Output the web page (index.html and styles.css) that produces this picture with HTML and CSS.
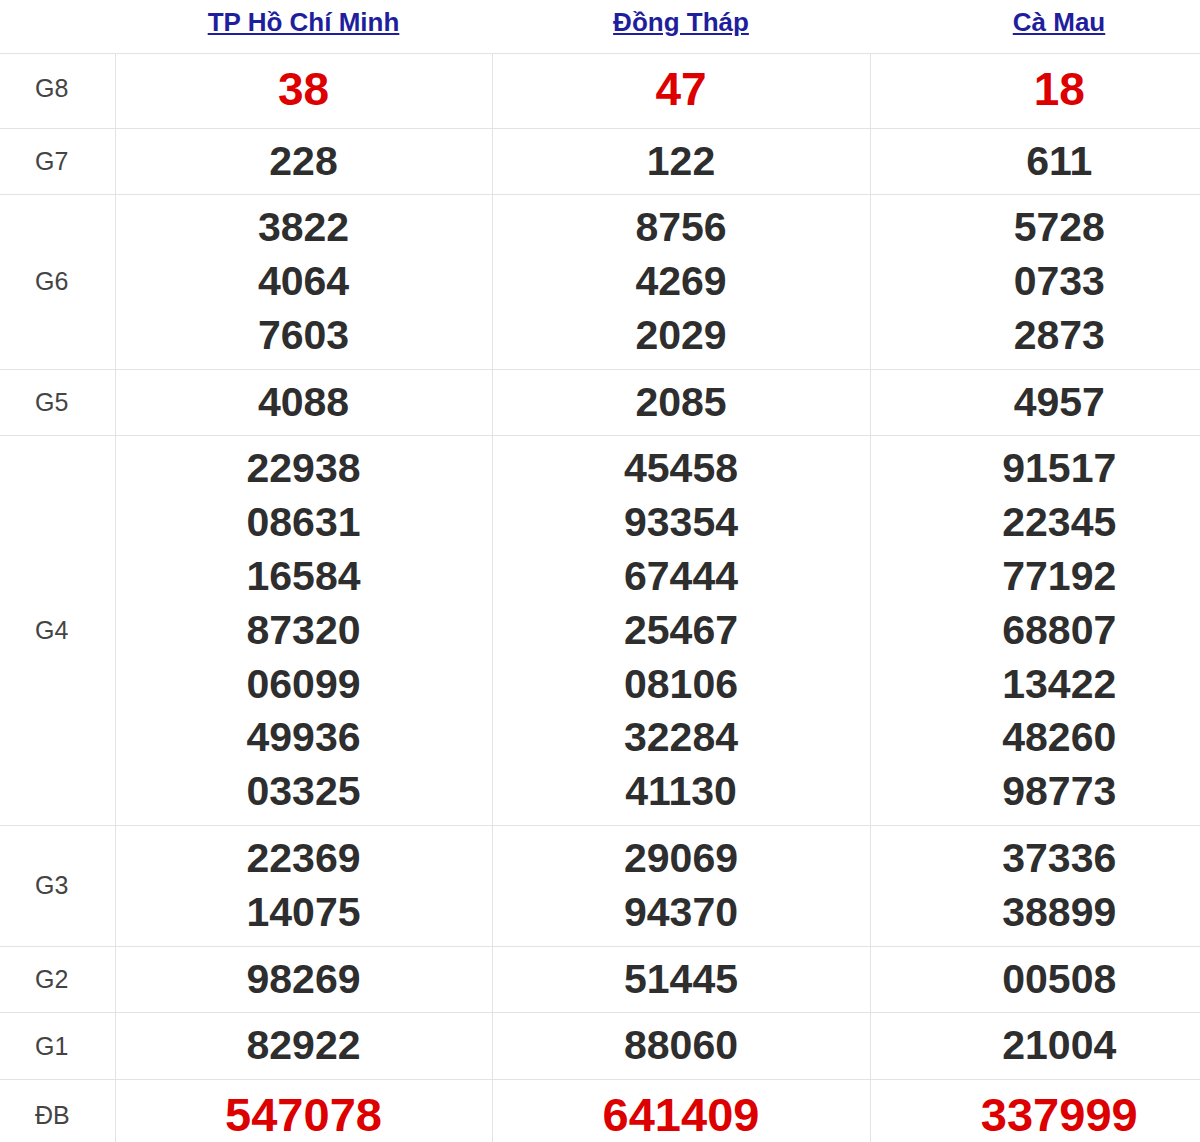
FILE: index.html
```html
<!DOCTYPE html>
<html lang="vi">
<head>
<meta charset="utf-8">
<title>Kết quả xổ số</title>
<link rel="stylesheet" href="styles.css">
</head>
<body>
<table class="kq">
  <colgroup>
    <col class="c-label">
    <col class="c-first">
    <col class="c-prov">
    <col class="c-prov">
  </colgroup>
  <thead>
    <tr class="head">
      <th></th>
      <th><a href="#">TP Hồ Chí Minh</a></th>
      <th><a href="#">Đồng Tháp</a></th>
      <th><a href="#">Cà Mau</a></th>
    </tr>
  </thead>
  <tbody>
    <tr class="g8">
      <td class="lbl">G8</td>
      <td><div class="n red">38</div></td>
      <td><div class="n red">47</div></td>
      <td><div class="n red">18</div></td>
    </tr>
    <tr>
      <td class="lbl">G7</td>
      <td><div class="n">228</div></td>
      <td><div class="n">122</div></td>
      <td><div class="n">611</div></td>
    </tr>
    <tr>
      <td class="lbl">G6</td>
      <td><div class="n">3822</div><div class="n">4064</div><div class="n">7603</div></td>
      <td><div class="n">8756</div><div class="n">4269</div><div class="n">2029</div></td>
      <td><div class="n">5728</div><div class="n">0733</div><div class="n">2873</div></td>
    </tr>
    <tr>
      <td class="lbl">G5</td>
      <td><div class="n">4088</div></td>
      <td><div class="n">2085</div></td>
      <td><div class="n">4957</div></td>
    </tr>
    <tr>
      <td class="lbl">G4</td>
      <td><div class="n">22938</div><div class="n">08631</div><div class="n">16584</div><div class="n">87320</div><div class="n">06099</div><div class="n">49936</div><div class="n">03325</div></td>
      <td><div class="n">45458</div><div class="n">93354</div><div class="n">67444</div><div class="n">25467</div><div class="n">08106</div><div class="n">32284</div><div class="n">41130</div></td>
      <td><div class="n">91517</div><div class="n">22345</div><div class="n">77192</div><div class="n">68807</div><div class="n">13422</div><div class="n">48260</div><div class="n">98773</div></td>
    </tr>
    <tr>
      <td class="lbl">G3</td>
      <td><div class="n">22369</div><div class="n">14075</div></td>
      <td><div class="n">29069</div><div class="n">94370</div></td>
      <td><div class="n">37336</div><div class="n">38899</div></td>
    </tr>
    <tr>
      <td class="lbl">G2</td>
      <td><div class="n">98269</div></td>
      <td><div class="n">51445</div></td>
      <td><div class="n">00508</div></td>
    </tr>
    <tr>
      <td class="lbl">G1</td>
      <td><div class="n">82922</div></td>
      <td><div class="n">88060</div></td>
      <td><div class="n">21004</div></td>
    </tr>
    <tr class="db">
      <td class="lbl">ĐB</td>
      <td><div class="n red">547078</div></td>
      <td><div class="n red">641409</div></td>
      <td><div class="n red">337999</div></td>
    </tr>
  </tbody>
</table>
</body>
</html>
```

FILE: styles.css
```css
html, body {
  margin: 0;
  padding: 0;
  background: #ffffff;
  overflow: hidden;
}

body {
  font-family: "Liberation Sans", Arial, sans-serif;
  color: #333333;
}

.kq {
  border-collapse: collapse;
  table-layout: fixed;
  width: 1248px;
}

.c-label { width: 115px; }
.c-first { width: 377px; }
.c-prov { width: 378px; }

.head th {
  height: 53px;
  padding: 0 0 8px 0;
  box-sizing: border-box;
  font-size: 26px;
  line-height: 30px;
  font-weight: bold;
  text-align: center;
  vertical-align: middle;
  border-bottom: 1px solid #e3e3e3;
}

.head a {
  color: #1f1f9e;
  text-decoration: underline;
  text-underline-offset: 2px;
}

.kq td {
  border-top: 1px solid #e3e3e3;
  border-left: 1px solid #e3e3e3;
  padding: 6px 0;
  text-align: center;
  vertical-align: middle;
}

.kq td.lbl {
  border-left: none;
  text-align: left;
  padding-left: 35px;
  font-size: 25px;
  color: #444444;
}

.n {
  font-size: 41px;
  line-height: 53.8px;
  font-weight: bold;
  color: #2e2e2e;
}

.n.red {
  color: #dc0000;
}

.g8 td {
  padding: 4px 0 8px 0;
}

.g8 .n {
  font-size: 46px;
  line-height: 62px;
}

.db td {
  padding: 4px 0 8px 0;
}

.db .n {
  font-size: 47px;
  line-height: 62px;
}
```
